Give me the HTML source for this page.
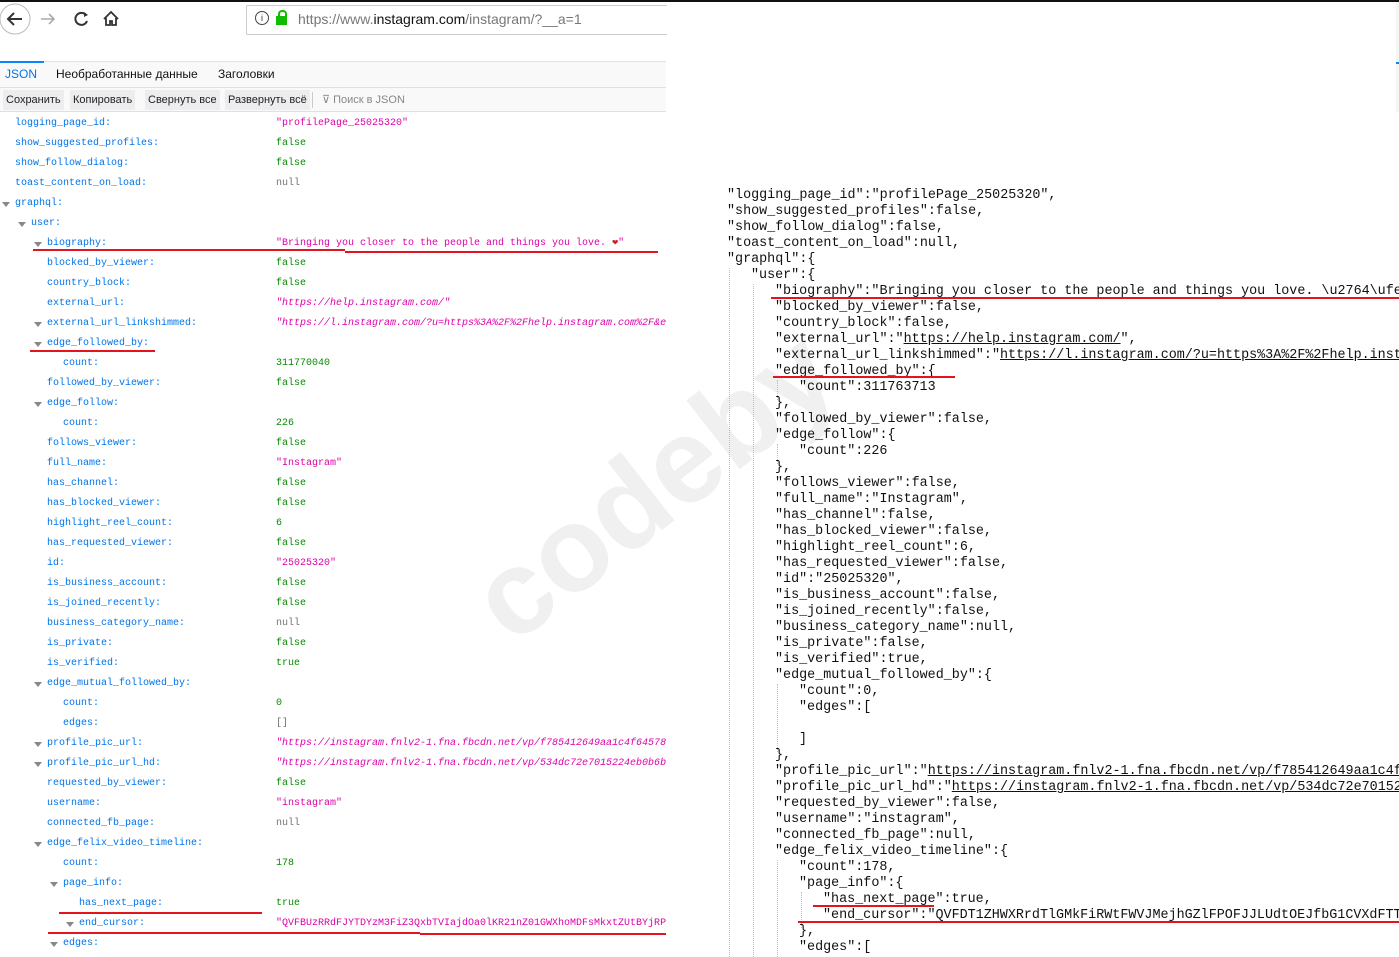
<!DOCTYPE html>
<html style="overflow:hidden"><head><meta charset="utf-8"><style>
body{margin:0;width:1399px;height:957px;overflow:hidden;background:#fff;position:relative;font-family:"Liberation Sans",sans-serif}
.a{position:absolute;white-space:nowrap}
.L{position:absolute;font-family:"Liberation Mono",monospace;font-size:10px;line-height:20px;height:20px;white-space:nowrap;color:#0074e8;margin-top:2px}
.v{position:absolute;left:276px;top:0}
.s{color:#dd00a9}.b{color:#058b00}.n{color:#737373}.i{font-style:italic}
.t{position:absolute;width:0;height:0;border-left:4px solid transparent;border-right:4px solid transparent;border-top:5px solid #888;margin-top:2px}
.R{position:absolute;font-family:"Liberation Mono",monospace;font-size:13.4px;line-height:16px;white-space:nowrap;color:#111;margin-top:2px}
.R u{text-decoration:underline}
.red{position:absolute;height:2px;background:#e3141e}
.btn{position:absolute;top:90px;height:20px;line-height:20px;background:#ededf0;font-size:11px;color:#222;padding:0 3px}
.g{position:absolute;border-left:1px dotted #bbb}
</style></head><body>
<div class="a" style="left:0;top:0;width:1399px;height:2px;background:#111"></div>
<div class="a" style="left:0;top:2px;width:666px;height:60px;background:#fff"></div>
<svg class="a" style="left:0;top:3px" width="130" height="34"><circle cx="15" cy="16" r="15" fill="#fff" stroke="#bbb"/><path d="M22 16H8M14 10l-6 6 6 6" stroke="#333" stroke-width="2" fill="none"/><path d="M54 16H41M49 11l5 5-5 5" stroke="#aaa" stroke-width="1.6" fill="none"/><path d="M86 12a6 6 0 1 0 1 6" stroke="#333" stroke-width="2" fill="none"/><path d="M84 9l4 3-4 2z" fill="#333"/><path d="M104 16l7-7 7 7M106 15v7h4v-4h2v4h4v-7" stroke="#333" stroke-width="1.8" fill="none"/></svg>
<div class="a" style="left:246px;top:5px;width:420px;height:28px;border:1px solid #ccc;border-right:none;border-radius:2px 0 0 2px;background:#fff"></div>
<div class="a" style="left:255px;top:11px;width:12px;height:12px;border:1px solid #444;border-radius:50%;font-size:9px;line-height:12px;text-align:center;color:#333">i</div>
<div class="a" style="left:276px;top:16px;width:11px;height:9px;background:#12bc00"></div>
<div class="a" style="left:278px;top:10px;width:5px;height:7px;border:2px solid #12bc00;border-bottom:none;border-radius:4px 4px 0 0"></div>
<div class="a" style="left:298px;top:11px;font-size:14px;color:#777">https://www.<span style="color:#111">instagram.com</span>/instagram/?__a=1</div>
<div class="a" style="left:0;top:61px;width:666px;height:50px;background:#f9f9fa;border-top:1px solid #e0e0e2"></div>
<div class="a" style="left:0;top:61px;width:44px;height:2px;background:#0a84ff"></div>
<div class="a" style="left:5px;top:67px;font-size:12px;color:#0074e8">JSON</div>
<div class="a" style="left:56px;top:67px;font-size:12px;color:#111">Необработанные данные</div>
<div class="a" style="left:218px;top:67px;font-size:12px;color:#111">Заголовки</div>
<div class="a" style="left:0;top:87px;width:666px;height:1px;background:#e0e0e2"></div>
<div class="btn" style="left:3px">Сохранить</div>
<div class="btn" style="left:70px">Копировать</div>
<div class="btn" style="left:145px">Свернуть все</div>
<div class="btn" style="left:225px">Развернуть всё</div>
<div class="a" style="left:312px;top:92px;width:1px;height:16px;background:#ccc"></div>
<div class="a" style="left:322px;top:93px;font-size:11px;color:#888">⊽ Поиск в JSON</div>
<div class="a" style="left:0;top:111px;width:666px;height:1px;background:#e0e0e2"></div>
<div class="a" style="left:1396px;top:2px;width:3px;height:110px;background:#f5f5f5"></div>
<div class="a" style="left:1396px;top:62px;width:3px;height:2px;background:#0a84ff"></div>
<div class="a" style="left:445px;top:560px;font:bold 120px 'Liberation Sans',sans-serif;color:#f0f0f0;transform:rotate(-38deg);transform-origin:left top;">codeby</div>

<div class="L" style="top:112px;left:15px">logging_page_id:<span class="v s" style="left:261px">"profilePage_25025320"</span></div>
<div class="L" style="top:132px;left:15px">show_suggested_profiles:<span class="v b" style="left:261px">false</span></div>
<div class="L" style="top:152px;left:15px">show_follow_dialog:<span class="v b" style="left:261px">false</span></div>
<div class="L" style="top:172px;left:15px">toast_content_on_load:<span class="v n" style="left:261px">null</span></div>
<div class="t" style="left:2px;top:200px"></div><div class="L" style="top:192px;left:15px">graphql:</div>
<div class="t" style="left:18px;top:220px"></div><div class="L" style="top:212px;left:31px">user:</div>
<div class="t" style="left:34px;top:240px"></div><div class="L" style="top:232px;left:47px">biography:<span class="v s" style="left:229px">"Bringing you closer to the people and things you love. <span style="color:#d0202a">❤</span>"</span></div>
<div class="L" style="top:252px;left:47px">blocked_by_viewer:<span class="v b" style="left:229px">false</span></div>
<div class="L" style="top:272px;left:47px">country_block:<span class="v b" style="left:229px">false</span></div>
<div class="L" style="top:292px;left:47px">external_url:<span class="v s i" style="left:229px">"https://help.instagram.com/"</span></div>
<div class="t" style="left:34px;top:320px"></div><div class="L" style="top:312px;left:47px">external_url_linkshimmed:<span class="v s i" style="left:229px">"https://l.instagram.com/?u=https%3A%2F%2Fhelp.instagram.com%2F&e</span></div>
<div class="t" style="left:34px;top:340px"></div><div class="L" style="top:332px;left:47px">edge_followed_by:</div>
<div class="L" style="top:352px;left:63px">count:<span class="v b" style="left:213px">311770040</span></div>
<div class="L" style="top:372px;left:47px">followed_by_viewer:<span class="v b" style="left:229px">false</span></div>
<div class="t" style="left:34px;top:400px"></div><div class="L" style="top:392px;left:47px">edge_follow:</div>
<div class="L" style="top:412px;left:63px">count:<span class="v b" style="left:213px">226</span></div>
<div class="L" style="top:432px;left:47px">follows_viewer:<span class="v b" style="left:229px">false</span></div>
<div class="L" style="top:452px;left:47px">full_name:<span class="v s" style="left:229px">"Instagram"</span></div>
<div class="L" style="top:472px;left:47px">has_channel:<span class="v b" style="left:229px">false</span></div>
<div class="L" style="top:492px;left:47px">has_blocked_viewer:<span class="v b" style="left:229px">false</span></div>
<div class="L" style="top:512px;left:47px">highlight_reel_count:<span class="v b" style="left:229px">6</span></div>
<div class="L" style="top:532px;left:47px">has_requested_viewer:<span class="v b" style="left:229px">false</span></div>
<div class="L" style="top:552px;left:47px">id:<span class="v s" style="left:229px">"25025320"</span></div>
<div class="L" style="top:572px;left:47px">is_business_account:<span class="v b" style="left:229px">false</span></div>
<div class="L" style="top:592px;left:47px">is_joined_recently:<span class="v b" style="left:229px">false</span></div>
<div class="L" style="top:612px;left:47px">business_category_name:<span class="v n" style="left:229px">null</span></div>
<div class="L" style="top:632px;left:47px">is_private:<span class="v b" style="left:229px">false</span></div>
<div class="L" style="top:652px;left:47px">is_verified:<span class="v b" style="left:229px">true</span></div>
<div class="t" style="left:34px;top:680px"></div><div class="L" style="top:672px;left:47px">edge_mutual_followed_by:</div>
<div class="L" style="top:692px;left:63px">count:<span class="v b" style="left:213px">0</span></div>
<div class="L" style="top:712px;left:63px">edges:<span class="v n" style="left:213px">[]</span></div>
<div class="t" style="left:34px;top:740px"></div><div class="L" style="top:732px;left:47px">profile_pic_url:<span class="v s i" style="left:229px">"https://instagram.fnlv2-1.fna.fbcdn.net/vp/f785412649aa1c4f64578</span></div>
<div class="t" style="left:34px;top:760px"></div><div class="L" style="top:752px;left:47px">profile_pic_url_hd:<span class="v s i" style="left:229px">"https://instagram.fnlv2-1.fna.fbcdn.net/vp/534dc72e7015224eb0b6b</span></div>
<div class="L" style="top:772px;left:47px">requested_by_viewer:<span class="v b" style="left:229px">false</span></div>
<div class="L" style="top:792px;left:47px">username:<span class="v s" style="left:229px">"instagram"</span></div>
<div class="L" style="top:812px;left:47px">connected_fb_page:<span class="v n" style="left:229px">null</span></div>
<div class="t" style="left:34px;top:840px"></div><div class="L" style="top:832px;left:47px">edge_felix_video_timeline:</div>
<div class="L" style="top:852px;left:63px">count:<span class="v b" style="left:213px">178</span></div>
<div class="t" style="left:50px;top:880px"></div><div class="L" style="top:872px;left:63px">page_info:</div>
<div class="L" style="top:892px;left:79px">has_next_page:<span class="v b" style="left:197px">true</span></div>
<div class="t" style="left:66px;top:920px"></div><div class="L" style="top:912px;left:79px">end_cursor:<span class="v s" style="left:197px">"QVFBUzRRdFJYTDYzM3FiZ3QxbTVIajdOa0lKR21nZ01GWXhoMDFsMkxtZUtBYjRP</span></div>
<div class="t" style="left:50px;top:940px"></div><div class="L" style="top:932px;left:63px">edges:</div>

<div class="g" style="left:729px;top:268px;height:689px"></div>
<div class="g" style="left:753px;top:284px;height:673px"></div>
<div class="g" style="left:777px;top:380px;height:20px"></div>
<div class="g" style="left:777px;top:444px;height:20px"></div>
<div class="g" style="left:777px;top:684px;height:68px"></div>
<div class="g" style="left:777px;top:860px;height:97px"></div>
<div class="g" style="left:801px;top:892px;height:36px"></div>

<div style="position:absolute;left:0;top:0;width:1399px;height:957px;overflow:hidden">
<div class="R" style="left:727px;top:186px">"logging_page_id":"profilePage_25025320",<br>"show_suggested_profiles":false,<br>"show_follow_dialog":false,<br>"toast_content_on_load":null,<br>"graphql":{</div>
<div class="R" style="left:751px;top:266px">"user":{</div>
<div class="R" style="left:775px;top:282px">"biography":"Bringing you closer to the people and things you love. \u2764\ufe0f",<br>"blocked_by_viewer":false,<br>"country_block":false,<br>"external_url":"<u>https://help.instagram.com/</u>",<br>"external_url_linkshimmed":"<u>https://l.instagram.com/?u=https%3A%2F%2Fhelp.instagram.com</u>",<br>"edge_followed_by":{</div>
<div class="R" style="left:799px;top:378px">"count":311763713</div>
<div class="R" style="left:775px;top:394px">},<br>"followed_by_viewer":false,<br>"edge_follow":{</div>
<div class="R" style="left:799px;top:442px">"count":226</div>
<div class="R" style="left:775px;top:458px">},<br>"follows_viewer":false,<br>"full_name":"Instagram",<br>"has_channel":false,<br>"has_blocked_viewer":false,<br>"highlight_reel_count":6,<br>"has_requested_viewer":false,<br>"id":"25025320",<br>"is_business_account":false,<br>"is_joined_recently":false,<br>"business_category_name":null,<br>"is_private":false,<br>"is_verified":true,<br>"edge_mutual_followed_by":{</div>
<div class="R" style="left:799px;top:682px">"count":0,<br>"edges":[<br><br>]</div>
<div class="R" style="left:775px;top:746px">},<br>"profile_pic_url":"<u>https://instagram.fnlv2-1.fna.fbcdn.net/vp/f785412649aa1c4f64578</u>",<br>"profile_pic_url_hd":"<u>https://instagram.fnlv2-1.fna.fbcdn.net/vp/534dc72e7015224eb0b6b</u>",<br>"requested_by_viewer":false,<br>"username":"instagram",<br>"connected_fb_page":null,<br>"edge_felix_video_timeline":{</div>
<div class="R" style="left:799px;top:858px">"count":178,<br>"page_info":{</div>
<div class="R" style="left:823px;top:890px">"has_next_page":true,<br>"end_cursor":"QVFDT1ZHWXRrdTlGMkFiRWtFWVJMejhGZlFPOFJJLUdtOEJfbG1CVXdFTTJ"</div>
<div class="R" style="left:799px;top:922px">},<br>"edges":[</div>
</div>

<div class="red" style="left:33px;top:249px;width:312px"></div>
<div class="red" style="left:345px;top:251px;width:313px"></div>
<div class="red" style="left:30px;top:350px;width:125px"></div>
<div class="red" style="left:59px;top:912px;width:203px"></div>
<div class="red" style="left:48px;top:932px;width:372px"></div>
<div class="red" style="left:420px;top:933px;width:246px"></div>
<div class="red" style="left:771px;top:297px;width:628px"></div>
<div class="red" style="left:773px;top:376px;width:182px"></div>
<div class="red" style="left:813px;top:905px;width:121px"></div>
<div class="red" style="left:798px;top:921px;width:601px"></div>
</body></html>
